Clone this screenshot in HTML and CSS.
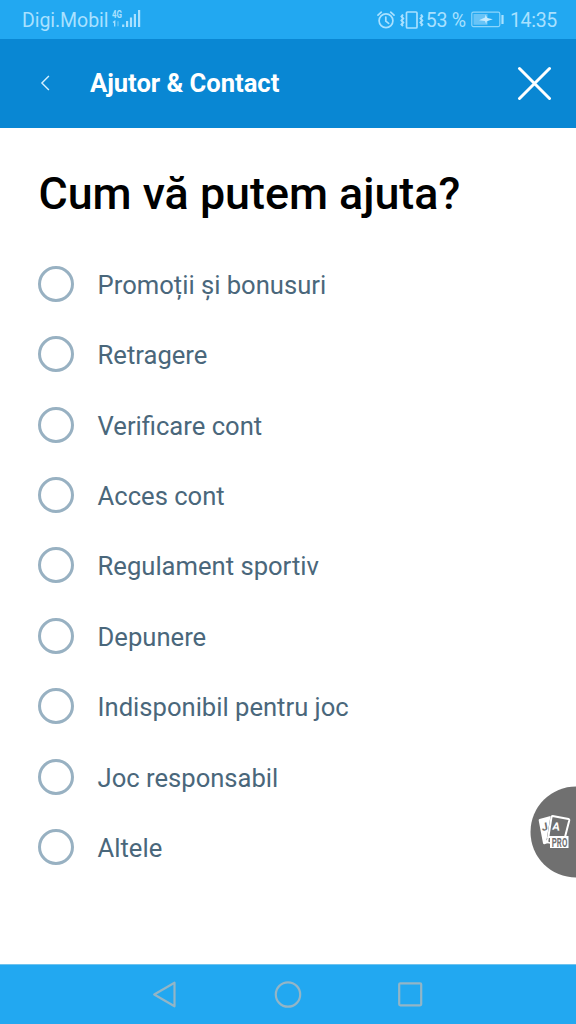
FILE: index.html
```html
<!DOCTYPE html>
<html lang="ro">
<head>
<meta charset="utf-8">
<title>Ajutor &amp; Contact</title>
<link rel="stylesheet" href="styles.css">
</head>
<body>
<div class="screen">
  <div class="status">
    <span class="carrier">Digi.Mobil</span>
    <svg class="signal" width="30" height="20" viewBox="0 0 30 20">
      <text class="net" x="0" y="9" textLength="10" lengthAdjust="spacingAndGlyphs">4G</text>
      <path d="M1 13.500l1.700-1.200v5.200" fill="none" stroke="#a9e1ff" stroke-width="1.300"/>
      <path d="M6 12.300v5" stroke="#5cc0f5" stroke-width="1.500"/>
      <path d="M11.200 15.500v2.600M15.100 12v6.100M19 8.500v9.600M22.900 5v13.100M27.100 1v17.100" stroke="#a9e1ff" stroke-width="2.200"/>
    </svg>
    <span class="grow"></span>
    <svg class="alarm" width="18" height="18" viewBox="0 0 18 18" fill="none" stroke="#a9e1ff" stroke-width="1.700" stroke-linecap="round">
      <circle cx="9" cy="9.700" r="6.900"/><path d="M8.800 6v4.200l2.800 2.200M1 4.200L4.300 1.200M17 4.200L13.700 1.200"/>
    </svg>
    <svg class="vibrate" width="24" height="18" viewBox="0 0 24 18" fill="none" stroke="#a9e1ff" stroke-width="1.700">
      <rect x="6.500" y="1" width="10.500" height="16" rx="1"/>
      <path d="M3 3.500L1.500 5.500l1.700 2-1.700 2 1.700 2-1.700 2 1.500 1.500M21 3.500l1.200 2-1.700 2 1.700 2-1.700 2 1.700 2-1.200 1.500" stroke-width="2"/>
    </svg>
    <span class="percent">53 %</span>
    <svg class="battery" width="34" height="17" viewBox="0 0 34 17">
      <rect x=".8" y="1.200" width="28" height="14.400" rx="1.500" fill="none" stroke="#8dd5fb" stroke-width="1.200"/>
      <rect x="2.500" y="3" width="14" height="10.800" fill="#68c4f7"/>
      <path d="M8 9.200L14 6.500l.5-2.700 1.800 3.300 5.500 1.200-6 2-.6 3-1.200-3.300z" fill="#c5ebff"/>
      <path d="M31.500 4v9" stroke="#a9e1ff" stroke-width="2.200"/>
    </svg>
    <span class="clock">14:35</span>
  </div>
  <header class="header">
    <svg class="back" width="10" height="16" viewBox="0 0 10 16"><path d="M8.900 1L1.900 8l7 7" fill="none" stroke="#d5f0ff" stroke-width="1.400"/></svg>
    <h1 class="heading">Ajutor &amp; Contact</h1>
    <svg class="close" width="34" height="34" viewBox="0 0 34 34"><path d="M2.500 2.500l30 30M32.500 2.500L2.500 32.500" stroke="#fff" stroke-width="3" stroke-linecap="round"/></svg>
  </header>
  <main class="content">
    <h2 class="question">Cum vă putem ajuta?</h2>
    <ul class="options">
      <li class="option"><span class="radio"></span><span class="label">Promoții și bonusuri</span></li>
      <li class="option"><span class="radio"></span><span class="label">Retragere</span></li>
      <li class="option"><span class="radio"></span><span class="label">Verificare cont</span></li>
      <li class="option"><span class="radio"></span><span class="label">Acces cont</span></li>
      <li class="option"><span class="radio"></span><span class="label">Regulament sportiv</span></li>
      <li class="option"><span class="radio"></span><span class="label">Depunere</span></li>
      <li class="option"><span class="radio"></span><span class="label">Indisponibil pentru joc</span></li>
      <li class="option"><span class="radio"></span><span class="label">Joc responsabil</span></li>
      <li class="option"><span class="radio"></span><span class="label">Altele</span></li>
    </ul>
  </main>
  <svg class="cards" width="46" height="92" viewBox="0 0 46 92">
    <circle cx="46" cy="46" r="45.500" fill="#707070"/>
    <path d="M9.500 33L20.500 30 16.500 54l3 2.500-5 1.700q-1.200.2-1.500-1L8.700 34.500q-.2-1.200.8-1.500z" fill="#fff"/>
    <path d="M22.500 30L38.500 33q1 .3.800 1.300L35 51H18.300L21.500 31q.2-1 1-1z" fill="#707070" stroke="#fff" stroke-width="2"/>
    <path d="M18.300 51l-1 5.500 3 .6" fill="none" stroke="#fff" stroke-width="1.500"/>
    <text class="jack" x="12" y="45" transform="rotate(-10 12 43)">J</text>
    <text class="ace" x="22.500" y="44" transform="rotate(10 25 41)">A</text>
    <rect x="20" y="50" width="18.500" height="12" fill="#fff"/>
    <text class="pro" x="21.800" y="60.500" textLength="15.500" lengthAdjust="spacingAndGlyphs">PRO</text>
  </svg>
  <nav class="nav">
    <svg width="26" height="30" viewBox="0 0 26 30"><path d="M2.200 14.500L22.500 2.700v23.600z"/></svg>
    <svg width="28" height="30" viewBox="0 0 28 30"><circle cx="14" cy="14.500" r="12.200"/></svg>
    <svg width="26" height="30" viewBox="0 0 26 30"><rect x="2.200" y="3.300" width="22" height="22" rx="1"/></svg>
  </nav>
</div>
</body>
</html>
```
FILE: styles.css
```css
body {
  margin: 0;
  font-family: Roboto, "Liberation Sans", sans-serif;
}

.screen {
  position: relative;
  display: flex;
  flex-direction: column;
  width: 576px;
  height: 1024px;
  overflow: hidden;
  background: #fff;
}

.status {
  display: flex;
  align-items: center;
  box-sizing: border-box;
  height: 38.5px;
  padding: 2px 19px 0 22px;
  background: #22a8f1;
  color: #a9e1ff;
  font-size: 19.5px;
}

.carrier { letter-spacing: -0.05px; }
.signal { margin: -3px 0 0 4px; }
.net { font-size: 10px; font-weight: 700; fill: #a9e1ff; }
.grow { flex: 1; }
.vibrate { margin-left: 5px; }
.percent { margin-left: 2px; letter-spacing: -0.2px; }
.battery { margin: -1px 5px 0 5px; }
.clock { letter-spacing: -0.3px; }

.header {
  display: flex;
  align-items: center;
  box-sizing: border-box;
  height: 89px;
  padding: 0 25px 0 40px;
  background: #0987d3;
}

.heading {
  flex: 1;
  margin: 0 0 0 40px;
  color: #fff;
  font-size: 25.6px;
  font-weight: 700;
  letter-spacing: -0.03px;
}

.content {
  flex: 1;
  padding: 35.5px 38.4px 0;
}

.question {
  margin: 0;
  color: #000;
  font-size: 44.8px;
  font-weight: 500;
  line-height: 62px;
  white-space: nowrap;
}

.options {
  margin: 23.6px 0 0;
  padding: 0;
  list-style: none;
}

.option {
  display: flex;
  align-items: center;
  height: 70.4px;
}

.radio {
  box-sizing: border-box;
  width: 36px;
  height: 36px;
  border: 3px solid #98b1c2;
  border-radius: 50%;
}

.label {
  margin: 2px 0 0 23.2px;
  color: #4a677b;
  font-size: 25.6px;
}

.cards {
  position: absolute;
  right: 0;
  top: 786px;
}

.jack,
.ace {
  fill: #707070;
  font-size: 11px;
  font-weight: 700;
}

.ace { fill: #fff; }

.pro {
  fill: #707070;
  font-size: 12px;
  font-weight: 700;
}

.nav {
  display: flex;
  align-items: center;
  justify-content: space-between;
  box-sizing: border-box;
  height: 60px;
  padding: 0 153px 0 152px;
  border-top: 1px solid #6fc3ee;
  background: #22a8f1;
  fill: none;
  stroke: #93b5c6;
  stroke-width: 2.2;
  stroke-linejoin: round;
}
```
